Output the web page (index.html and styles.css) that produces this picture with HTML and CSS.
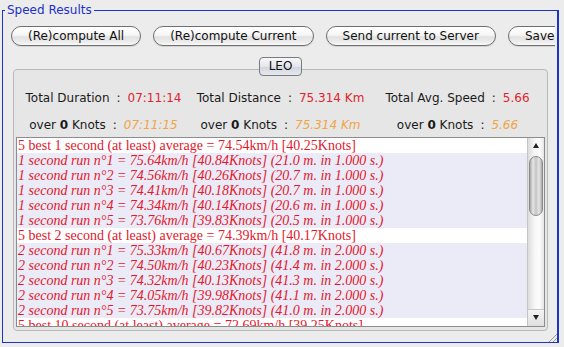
FILE: index.html
```html
<!DOCTYPE html>
<html>
<head>
<meta charset="utf-8">
<link rel="stylesheet" href="styles.css">
</head>
<body>
<section class="group">
  <h2 class="group-title">Speed Results</h2>
  <div class="toolbar">
    <button class="btn">(Re)compute All</button>
    <button class="btn">(Re)compute Current</button>
    <button class="btn">Send current to Server</button>
    <button class="btn">Save(Re)compute</button>
  </div>
  <div class="tabs"><span class="tab">LEO</span></div>
  <div class="panel">
    <div class="stats">
      <div class="stat">Total Duration<span class="sep">:</span><span class="val">07:11:14</span></div>
      <div class="stat">Total Distance<span class="sep">:</span><span class="val">75.314 Km</span></div>
      <div class="stat">Total Avg. Speed<span class="sep">:</span><span class="val">5.66</span></div>
      <div class="stat sub">over <b>0</b> Knots<span class="sep">:</span><span class="val2">07:11:15</span></div>
      <div class="stat sub">over <b>0</b> Knots<span class="sep">:</span><span class="val2">75.314 Km</span></div>
      <div class="stat sub">over <b>0</b> Knots<span class="sep">:</span><span class="val2">5.66</span></div>
    </div>
    <div class="list">
      <div class="rows">
        <div class="row head">5 best 1 second (at least) average = 74.54km/h [40.25Knots]</div>
        <div class="row run">1 second run n°1 = 75.64km/h [40.84Knots] (21.0 m. in 1.000 s.)</div>
        <div class="row run">1 second run n°2 = 74.56km/h [40.26Knots] (20.7 m. in 1.000 s.)</div>
        <div class="row run">1 second run n°3 = 74.41km/h [40.18Knots] (20.7 m. in 1.000 s.)</div>
        <div class="row run">1 second run n°4 = 74.34km/h [40.14Knots] (20.6 m. in 1.000 s.)</div>
        <div class="row run">1 second run n°5 = 73.76km/h [39.83Knots] (20.5 m. in 1.000 s.)</div>
        <div class="row head">5 best 2 second (at least) average = 74.39km/h [40.17Knots]</div>
        <div class="row run">2 second run n°1 = 75.33km/h [40.67Knots] (41.8 m. in 2.000 s.)</div>
        <div class="row run">2 second run n°2 = 74.50km/h [40.23Knots] (41.4 m. in 2.000 s.)</div>
        <div class="row run">2 second run n°3 = 74.32km/h [40.13Knots] (41.3 m. in 2.000 s.)</div>
        <div class="row run">2 second run n°4 = 74.05km/h [39.98Knots] (41.1 m. in 2.000 s.)</div>
        <div class="row run">2 second run n°5 = 73.75km/h [39.82Knots] (41.0 m. in 2.000 s.)</div>
        <div class="row head">5 best 10 second (at least) average = 72.69km/h [39.25Knots]</div>
      </div>
      <div class="scrollbar">
        <div class="arrow up"></div>
        <div class="thumb"></div>
        <div class="track"></div>
        <div class="arrow down"></div>
      </div>
    </div>
  </div>
  <div class="grip"></div>
</section>
</body>
</html>
```
FILE: styles.css
```css
html, body {
  margin: 0;
  padding: 0;
}
body {
  width: 564px;
  height: 347px;
  overflow: hidden;
  background: #ececec;
  font-family: "DejaVu Sans", sans-serif;
  font-size: 12px;
  color: #111;
}
.group {
  position: relative;
  margin: 10px 5px 0 2px;
  padding: 15px 2px 11px 8px;
  border: 1px solid #1c34c4;
  border-right-width: 2px;
}
.group-title {
  position: absolute;
  top: -9px;
  left: 2px;
  margin: 0;
  padding: 0 2px;
  background: #ececec;
  font-size: 12px;
  font-weight: normal;
  line-height: 16px;
  color: #2030c8;
}
.toolbar {
  display: flex;
  gap: 12px;
  overflow: hidden;
  height: 21px;
}
.btn {
  flex: none;
  height: 20px;
  padding: 0 16px;
  border: 1px solid #6f6f6f;
  border-radius: 10px;
  background: linear-gradient(#ffffff 0%, #f6f6f6 45%, #e2e2e2 55%, #ededed 85%, #fafafa 100%);
  font-family: "DejaVu Sans", sans-serif;
  font-size: 12px;
  line-height: 18px;
  color: #111;
  box-shadow: 0 1px 1px rgba(0,0,0,0.12);
}
.tabs {
  display: flex;
  justify-content: center;
  margin: 10px 7px 0 2px;
  position: relative;
  z-index: 1;
}
.tab {
  width: 41px;
  height: 17px;
  border: 1px solid #7a7a7a;
  border-radius: 4px;
  background: linear-gradient(#f8f8fa 0%, #e4e6ec 50%, #d2d6e0 55%, #e6e8f0 100%);
  text-align: center;
  line-height: 17px;
  font-size: 12px;
  color: #111;
}
.panel {
  margin: -7px 7px 0 2px;
  padding: 20px 1px 3px 1px;
  border: 1px solid #b9b9b9;
  border-radius: 4px;
  background: #e6e6e6;
}
.stats {
  display: grid;
  grid-template-columns: repeat(3, 1fr);
  row-gap: 11px;
}
.stat {
  text-align: center;
  line-height: 16px;
  white-space: nowrap;
  color: #1a1a1a;
}
.sep {
  margin: 0 7px;
}
.val {
  color: #e0242e;
}
.val2 {
  color: #f0a548;
  font-style: italic;
}
.list {
  display: flex;
  margin-top: 4px;
  margin-left: 1px;
  margin-right: 1px;
  height: 188px;
  border: 1px solid #8c8c8c;
  background: #fff;
  overflow: hidden;
}
.rows {
  flex: 1;
  min-width: 0;
  overflow: hidden;
  font-family: "Liberation Serif", "Times New Roman", serif;
  font-size: 14px;
  color: #e3172c;
}
.row {
  height: 15px;
  line-height: 15px;
  padding-left: 1px;
  white-space: nowrap;
}
.row.run {
  background: #ebebf8;
  font-style: italic;
}
.scrollbar {
  flex: none;
  width: 16px;
  display: flex;
  flex-direction: column;
  border-left: 1px solid #c4c4c4;
  background: linear-gradient(90deg, #dcdcdc, #f6f6f6 40%, #fdfdfd 70%, #e6e6e6);
}
.arrow {
  height: 14px;
  position: relative;
}
.arrow::after {
  content: "";
  position: absolute;
  left: 5px;
  border-left: 3px solid transparent;
  border-right: 3px solid transparent;
}
.arrow.up::after {
  top: 5px;
  border-bottom: 5px solid #222;
}
.arrow.down {
  height: 16px;
  border-top: 1px solid #c8c8c8;
  background: linear-gradient(#f4f4f4, #e0e0e0);
}
.arrow.down::after {
  top: 5px;
  border-top: 5px solid #222;
}
.thumb {
  margin: 4px 1px 0 1px;
  height: 58px;
  border: 1px solid #8a8a8a;
  border-radius: 7px;
  background: linear-gradient(90deg, #a8a8a8, #e6e6e6 25%, #c4c4c4 50%, #e6e6e6 75%, #a8a8a8);
}
.track {
  flex: 1;
}
.grip {
  position: absolute;
  right: 0;
  bottom: 0;
  width: 8px;
  height: 8px;
  background: linear-gradient(135deg, transparent 45%, #9a9a9a 45%, #9a9a9a 55%, transparent 55%, transparent 70%, #9a9a9a 70%, #9a9a9a 80%, transparent 80%);
}
```
